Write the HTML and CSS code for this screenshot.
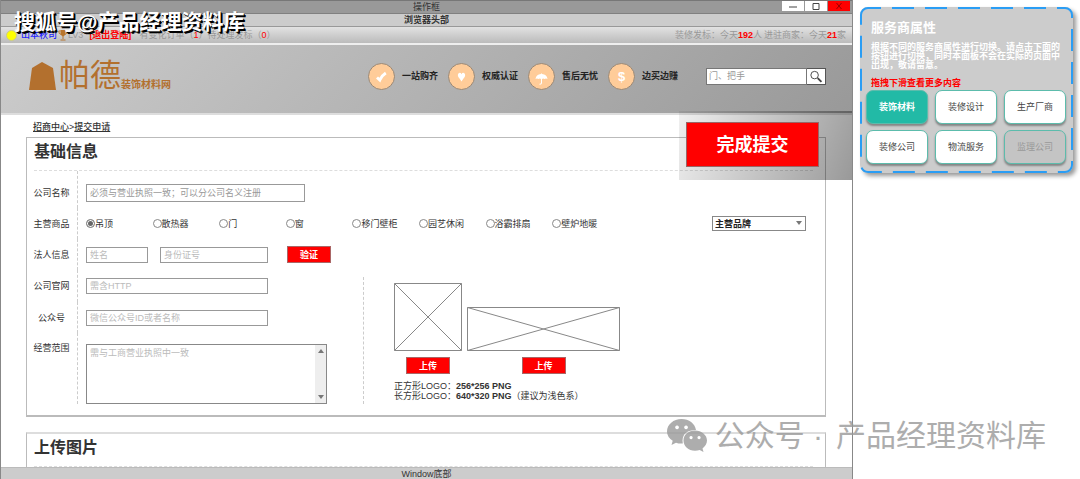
FILE: index.html
```html
<!DOCTYPE html>
<html lang="zh-CN">
<head>
<meta charset="utf-8">
<meta name="viewport" content="width=device-width, initial-scale=1">
<title>提交申请</title>
<link rel="stylesheet" href="styles.css">
</head>
<body>
<div class="window">
  <header class="titlebar">
    <span class="titlebar-text">操作框</span>
    <div class="controls">
      <button type="button" class="control" aria-label="最小化"><svg viewBox="0 0 22 10"><path d="M7 6h8"/></svg></button>
      <button type="button" class="control" aria-label="最大化"><svg viewBox="0 0 22 10"><path d="M8 2.5h6v6h-6z"/></svg></button>
      <button type="button" class="control control-close" aria-label="关闭"><svg viewBox="0 0 22 10"><path d="M8.500 2l5 6M13.500 2l-5 6"/></svg></button>
    </div>
  </header>
  <div class="browser-head">浏览器头部</div>
  <div class="status">
    <div class="status-user">
      <span class="avatar"></span>
      <a class="user" href="#">山本秋司</a>
      <svg class="trophy" viewBox="0 0 10 12"><path d="M2.500 1h5v3.500q0 2-2.500 3-2.500-1-2.500-3z" fill="#b8752d"/><path d="M2.500 2H.7q0 3 2.300 3.500M7.500 2h1.800q0 3-2.300 3.500M5 7v3M2.500 11h5" fill="none" stroke="#b8752d"/></svg>
      <span>LV3</span>
      <a class="logout" href="#">[退出登陆]</a>
      <span class="orders">有变化订单（<em>1</em>）</span>
      <span>待处理发标（<em>0</em>）</span>
    </div>
    <div class="status-stats"><span>装修发标：今天<b>192</b>人</span><span>进驻商家：今天<b>21</b>家</span></div>
  </div>
  <div class="banner">
    <a class="logo" href="#">
      <svg class="logo-mark" viewBox="0 0 27 29"><path d="M3 6L13 0l11 6 3 22H0z"/></svg>
      <span class="logo-name">帕德</span><span class="logo-sub">装饰材料网</span>
    </a>
    <ul class="features">
      <li><svg viewBox="0 0 27 27"><circle cx="13.500" cy="13.500" r="13"/><path class="tick" d="M9 14.500l2.800 2.500q2-4.500 6-7"/></svg>一站购齐</li>
      <li><svg viewBox="0 0 27 27"><circle cx="13.500" cy="13.500" r="13"/><path class="glyph" d="M13.500 18.500q-1-2-3-4.300-1.500-3 .5-4.300 1.800-.6 2.500 1.300.7-1.900 2.500-1.300 2 1.300.5 4.300-2 2.300-3 4.300z"/></svg>权威认证</li>
      <li><svg viewBox="0 0 27 27"><circle cx="13.500" cy="13.500" r="13"/><path class="glyph" d="M7.500 16q.5-4.500 5.500-5l.5-1 .5 1q5 .5 5.500 5-1.500-1-3 0-1.300-1-2.500 0v4q-.2 2-2.500 1.800v-1q1.500.1 1.500-1V16q-1.200-1-2.500 0-1.500-1-3 0z"/></svg>售后无忧</li>
      <li><svg viewBox="0 0 27 27"><circle cx="13.500" cy="13.500" r="13"/><text class="dollar" x="13.500" y="18" text-anchor="middle">$</text></svg>边买边赚</li>
    </ul>
    <form class="search">
      <input type="text" placeholder="门、把手" aria-label="搜索">
      <button type="button" aria-label="搜索"><svg viewBox="0 0 18 16"><circle cx="7.500" cy="6.500" r="4"/><path class="handle" d="M10.800 9.800l4 4"/></svg></button>
    </form>
  </div>

  <main class="content">
    <nav class="crumbs"><a href="#">招商中心</a>&gt;<a href="#">提交申请</a></nav>
    <div class="submit-bar"><button type="button">完成提交</button></div>

    <section class="card">
      <h2>基础信息</h2>
      <form class="fields">
        <div class="label"><label for="name">公司名称</label></div>
        <div class="field wide"><input id="name" class="tall" type="text" placeholder="必须与营业执照一致；可以分公司名义注册"></div>

        <div class="label"><span id="goods">主营商品</span></div>
        <div class="field wide goods">
          <div class="radios" role="radiogroup" aria-labelledby="goods">
            <label><input type="radio" name="goods" checked>吊顶</label>
            <label><input type="radio" name="goods">散热器</label>
            <label><input type="radio" name="goods">门</label>
            <label><input type="radio" name="goods">窗</label>
            <label><input type="radio" name="goods">移门壁柜</label>
            <label><input type="radio" name="goods">园艺休闲</label>
            <label><input type="radio" name="goods">浴霸排扇</label>
            <label><input type="radio" name="goods">壁炉地暖</label>
          </div>
          <div class="select"><select aria-label="主营品牌"><option>主营品牌</option></select><svg viewBox="0 0 6 4"><path d="M0 0h6L3 4z"/></svg></div>
        </div>

        <div class="label"><label for="person">法人信息</label></div>
        <div class="field wide person">
          <input id="person" class="short" type="text" placeholder="姓名">
          <input class="mid" type="text" placeholder="身份证号" aria-label="身份证号">
          <button type="button" class="red">验证</button>
        </div>

        <div class="label"><label for="site">公司官网</label></div>
        <div class="field"><input id="site" type="text" placeholder="需含HTTP"></div>

        <div class="label"><label for="wechat">公众号</label></div>
        <div class="field"><input id="wechat" type="text" placeholder="微信公众号ID或者名称"></div>

        <div class="label label-top"><label for="scope">经营范围</label></div>
        <div class="field scope">
          <textarea id="scope" placeholder="需与工商营业执照中一致"></textarea>
          <div class="scrollbar"><svg viewBox="0 0 6 4"><path d="M0 4h6L3 0z"/></svg><svg viewBox="0 0 6 4"><path d="M0 0h6L3 4z"/></svg></div>
        </div>

        <div class="logos">
          <div class="slots">
            <svg class="slot" viewBox="0 0 68 68"><path d="M.5.5h67v67H.5zM.5.5l67 67M67.500.5l-67 67"/></svg>
            <svg class="slot" viewBox="0 0 153 44"><path d="M.5.5h152v43H.5zM.5.5l152 43M152.500.5l-152 43"/></svg>
            <button type="button" class="red">上传</button>
            <button type="button" class="red">上传</button>
          </div>
          <p>正方形LOGO：<b>256*256 PNG</b><br>长方形LOGO：<b>640*320 PNG</b>（建议为浅色系）</p>
        </div>
      </form>
    </section>

    <section class="card card-cut">
      <h2>上传图片</h2>
    </section>
  </main>
  <footer class="foot">Window底部</footer>
</div>

<aside class="side">
  <div class="panel">
    <svg class="dashes"><rect x="1" y="1" rx="7"/></svg>
    <h3>服务商属性</h3>
    <p>根据不同的服务商属性进行切换。请点击下面的按钮进行切换，同时本面板不会在实际的页面中出现，敬请留意。</p>
    <p class="hint">拖拽下滑查看更多内容</p>
    <div class="types">
      <button type="button" class="active">装饰材料</button>
      <button type="button">装修设计</button>
      <button type="button">生产厂商</button>
      <button type="button">装修公司</button>
      <button type="button">物流服务</button>
      <button type="button" disabled>监理公司</button>
    </div>
  </div>
</aside>

<div class="mark mark-top">搜狐号@产品经理资料库</div>
<div class="mark mark-bottom">
  <svg viewBox="0 0 40 34"><path fill-rule="evenodd" d="M14.500 0C22 0 28 4.500 29 11q-13 0-13.500 10.500l.3 3q-3.800.3-6.800-.8L4.500 26l1.200-4.200Q0 18 0 12.500C0 5.500 6.500 0 14.500 0zM10 6.500a1.900 1.900 0 1 0 .1 0zM19 6.500a1.900 1.900 0 1 0 .1 0z"/><path fill-rule="evenodd" d="M28 11.500c6.600 0 12 4.500 12 10 0 3.300-2 6-4.500 8l1 3.500-3.800-2q-2.200.7-4.700.7c-6.600 0-11.500-4.600-11.500-10.200s4.900-10 11.500-10zM24 17a1.600 1.600 0 1 0 .1 0zM32 17a1.600 1.600 0 1 0 .1 0z"/></svg>
  <span>公众号 ·</span><span>产品经理资料库</span>
</div>
</body>
</html>
```
FILE: styles.css
```css
* { box-sizing: border-box; }

body {
  margin: 0;
  position: relative;
  min-height: 100vh;
  display: flex;
  align-items: stretch;
  overflow-x: hidden;
  background: #fff;
  color: #333;
  font: 9px/12px "Liberation Sans", "Noto Sans CJK SC", sans-serif;
}

h2, h3, p, ul { margin: 0; padding: 0; }
button, input, select, textarea { margin: 0; padding: 0; font: inherit; color: inherit; border-radius: 0; }
a { color: inherit; }
svg { display: block; }

.window {
  flex: 1;
  min-width: 0;
  display: flex;
  flex-direction: column;
  border: 1px solid #888;
  border-width: 0 1px;
}

.titlebar {
  display: grid;
  grid-template-columns: 1fr auto 1fr;
  height: 14px;
  background: #999;
  border-top: 1px solid #777;
  border-bottom: 1px solid #808080;
}
.titlebar-text { grid-column: 2; }
.controls { display: flex; justify-content: flex-end; gap: 1px; padding-right: 2px; }
.control { width: 22px; height: 10px; border: 0; background: #fff; }
.control svg { width: 22px; height: 10px; fill: none; stroke: #444; }
.control-close { background: #f00; }
.control-close svg { stroke: #900; }

.browser-head {
  height: 13px;
  background: #ccc;
  border-bottom: 1px solid #999;
  text-align: center;
  font-weight: 700;
}

.status {
  display: flex;
  justify-content: space-between;
  align-items: center;
  height: 17px;
  padding: 0 6px 0 5px;
  background: linear-gradient(#e2e2e2, #bbb);
  border-bottom: 1px solid #eee;
  color: #999;
  white-space: nowrap;
}
.status-user { display: flex; align-items: center; }
.status em { color: #f00; font-style: normal; }
.status b { color: #f00; }
.avatar { width: 11px; height: 11px; margin-right: 4px; border-radius: 50%; background: #ff0; border: 1px solid #cc8; }
.user { color: #22f; font-weight: 500; text-decoration: none; }
.trophy { width: 10px; height: 12px; margin-left: 1px; }
.logout { margin-left: 6px; color: #f00; font-weight: 700; text-decoration: none; }
.orders { margin-left: 8px; }
.status-stats { display: flex; gap: 2px; }

.banner {
  display: flex;
  align-items: center;
  height: 71px;
  padding: 0 26px 6px 28px;
  background: linear-gradient(135deg, #ccc, #999);
  border-top: 1px solid #eee;
  border-bottom: 2px solid #ddd;
}
.logo {
  flex: 1;
  display: flex;
  align-items: flex-end;
  color: #b3702e;
  text-decoration: none;
  white-space: nowrap;
}
.logo-mark { width: 27px; height: 29px; margin: 0 3px 1px 0; fill: #b3702e; }
.logo-name { font-size: 31px; line-height: 32px; }
.logo-sub { font-size: 10px; line-height: 14px; font-weight: 700; }
.features { display: flex; gap: 10px; list-style: none; color: #222; font-weight: 700; }
.features li { display: flex; align-items: center; gap: 7px; white-space: nowrap; }
.features svg { width: 27px; height: 27px; fill: #fc9; stroke: #998877; }
.features .glyph { fill: #fff; stroke: none; }
.features .tick { fill: none; stroke: #fff; stroke-width: 3; }
.dollar { font: bold 13px "Liberation Sans", sans-serif; fill: #fff; stroke: none; }
.search { display: flex; height: 17px; margin-left: 28px; }
.search input { width: 101px; padding: 0 2px; border: 1px solid #777; background: #fff; }
.search button { width: 19px; border: 1px solid #555; border-left-width: 0; background: #fff; }
.search svg { width: 18px; height: 15px; fill: none; stroke: #444; }
.search .handle { stroke-width: 2; }
::placeholder { color: #bbb; opacity: 1; }
.search ::placeholder, #name::placeholder { color: #999; }

.content { position: relative; flex: 1; padding: 6px 26px 0 25px; }
.crumbs { padding-left: 7px; height: 16px; font-weight: 500; }

.submit-bar {
  position: absolute;
  top: -4px;
  right: 0;
  padding: 11px 33px 13px 7px;
  background: linear-gradient(110deg, rgba(0,0,0,.06), rgba(0,0,0,.4));
}
.submit-bar button {
  display: block;
  width: 133px;
  height: 45px;
  border: 1px solid #966;
  background: #f00;
  color: #fff;
  font-size: 18px;
  font-weight: 700;
}

.card { border: 1px solid #bbb; border-bottom-width: 2px; padding: 0 12px 11px 7px; }
.card h2 {
  height: 33px;
  border-bottom: 1px dashed #ddd;
  font-size: 16px;
  line-height: 27px;
  font-weight: 700;
}
.card-cut { margin-top: 15px; padding-bottom: 0; border-top: 2px solid #ddd; border-bottom: 0; }

.fields {
  display: grid;
  grid-template-columns: 44px 277px 1fr;
  grid-template-rows: 37px 31px 31px 32px 31px auto;
}
.label {
  grid-column: 1;
  display: flex;
  align-items: center;
  justify-content: center;
  padding-right: 8px;
  border-right: 1px dashed #ccc;
  white-space: nowrap;
}
.label:first-child, .label:first-child + .field { padding-top: 6px; }
.label-top { align-items: flex-start; padding-top: 9px; }
.field { grid-column: 2; display: flex; align-items: center; padding-left: 8px; }
.wide { grid-column: 2 / 4; }
.field input[type="text"] { width: 182px; height: 16px; padding: 0 3px; border: 1px solid #999; background: #fff; }
.field input.tall { width: 219px; height: 18px; }
.field input.short { width: 62px; }
.field input.mid { width: 108px; margin: 0 19px 0 12px; }
.goods { justify-content: space-between; padding-right: 7px; }
.radios { width: 74%; display: grid; grid-template-columns: repeat(8, 1fr); }
.radios label { display: flex; align-items: center; white-space: nowrap; }
.radios input {
  appearance: none;
  width: 9px;
  height: 9px;
  border: 1px solid #888;
  border-radius: 50%;
  background: #fff;
}
.radios input:checked { background: #666; box-shadow: inset 0 0 0 1px #fff; }
.select { position: relative; width: 94px; }
.select select {
  display: block;
  appearance: none;
  width: 100%;
  height: 15px;
  padding: 0 2px;
  border: 1px solid #888;
  background: #fff;
  color: #222;
  font-weight: 700;
}
.select svg { position: absolute; right: 4px; top: 5px; width: 6px; height: 4px; fill: #777; }
.red {
  width: 44px;
  height: 17px;
  border: 1px solid #a66;
  background: #f00;
  color: #fff;
  font-weight: 700;
}
.scope { position: relative; align-self: start; width: 249px; padding-top: 11px; }
.scope textarea {
  width: 100%;
  height: 60px;
  padding: 2px 14px 2px 3px;
  border: 1px solid #888;
  background: #fff;
  resize: none;
  overflow: hidden;
}
.scrollbar {
  position: absolute;
  top: 12px;
  right: 1px;
  bottom: 1px;
  width: 11px;
  display: flex;
  flex-direction: column;
  align-items: center;
  justify-content: space-between;
  padding: 4px 0;
  background: #eee;
}
.scrollbar svg { width: 6px; height: 4px; fill: #777; }

.logos {
  grid-column: 3;
  grid-row: 4 / 7;
  margin-top: 7px;
  margin-left: 8px;
  padding: 6px 0 0 30px;
  border-left: 1px dashed #ccc;
}
.slots { display: grid; grid-template-columns: 68px 153px; gap: 6px 5px; align-items: end; justify-items: center; }
.slot { width: 100%; fill: none; stroke: #888; }
.logos p { margin-top: 7px; line-height: 10px; }
.logos b { font-weight: 700; }

.foot { height: 13px; background: #ccc; border-top: 1px solid #bbb; text-align: center; }

.side { width: 227px; padding: 7px 7px 0; }
.panel {
  position: relative;
  height: 166px;
  padding: 11px 7px 10px 6px;
  border-radius: 8px;
  background: #ccc;
  color: #fff;
  box-shadow: 3px 3px 4px rgba(0,0,0,.4);
}
.dashes { position: absolute; top: 0; left: 0; width: 100%; height: 100%; overflow: visible; }
.dashes rect { width: calc(100% - 2px); height: calc(100% - 2px); fill: none; stroke: #2a9df4; stroke-width: 2; stroke-dasharray: 22 11; stroke-dashoffset: 9; }
.panel h3 { padding-left: 5px; font-size: 13px; line-height: 20px; font-weight: 700; }
.panel p { margin: 5px 0 0 5px; font-weight: 700; line-height: 9px; }
.panel .hint { margin: 8px 0 2px 5px; color: #f00; line-height: 10px; }
.types { position: relative; display: grid; grid-template-columns: repeat(3, 1fr); gap: 6px 7px; }
.types button {
  height: 34px;
  border: 1px solid #5cbcac;
  border-radius: 7px;
  background: #fff;
  color: #444;
  box-shadow: 0 2px 2px rgba(0,0,0,.35);
}
.types .active { background: #22baa6; color: #fff; font-weight: 700; }
.types button:disabled { background: #c4c4c4; color: #999; }

.mark { position: absolute; white-space: nowrap; pointer-events: none; }
.mark-top { left: 14px; top: 8px; color: #fff; font-size: 21px; line-height: 28px; font-weight: 700; text-shadow: 1px 1px 0 #000, 2px 2px 0 #000; }
.mark-bottom { right: 34px; bottom: 24px; display: flex; align-items: center; gap: 8px; color: #999; font-size: 30px; line-height: 40px; opacity: .8; }
.mark-bottom svg { width: 40px; height: 34px; fill: #999; }
.mark-bottom span + span { margin-left: 5px; }
```
